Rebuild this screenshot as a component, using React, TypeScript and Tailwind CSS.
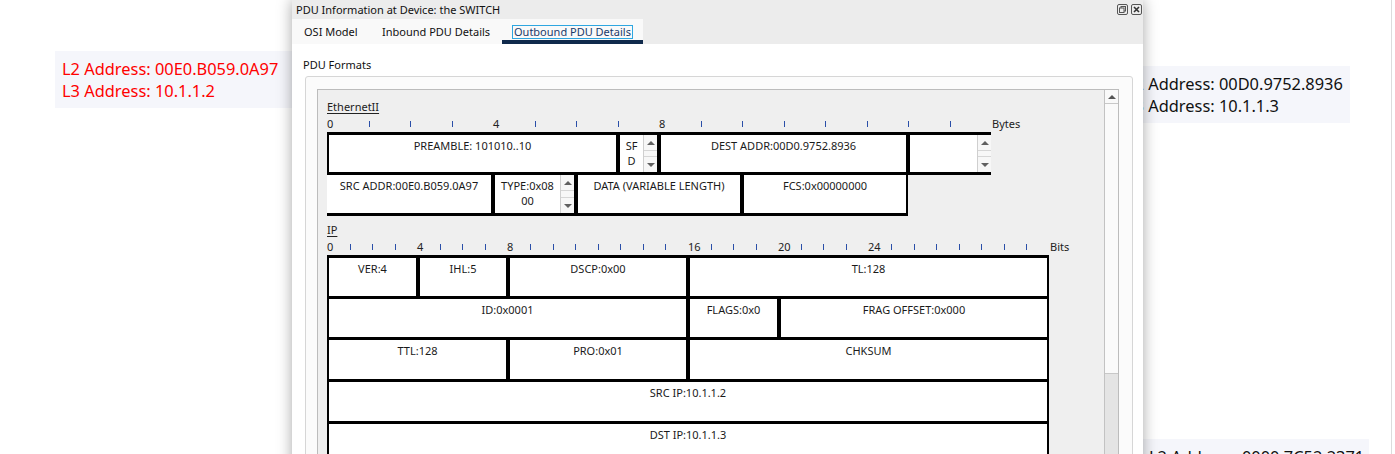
import React from "react";

const FONT = "font-['Noto_Sans',sans-serif]";

function Spinner() {
  return (
    <div className="w-[14px] h-full flex flex-col border-l border-[#cfcfcf] bg-[#f7f7f7] shrink-0">
      <div className="h-[16px] flex items-center justify-center border-b border-[#d6d6d6]">
        <div className="w-0 h-0 border-x-[4px] border-x-transparent border-b-[4px] border-b-[#606060]" />
      </div>
      <div className="flex-1" />
      <div className="h-[16px] flex items-center justify-center border-t border-[#d6d6d6]">
        <div className="w-0 h-0 border-x-[4px] border-x-transparent border-t-[4px] border-t-[#606060]" />
      </div>
    </div>
  );
}

function Field({
  w,
  children,
  spin,
  extra = "",
}: {
  w: string;
  children?: React.ReactNode;
  spin?: boolean;
  extra?: string;
}) {
  return (
    <div className={`flex h-full shrink-0 bg-white border-y-[3px] border-x-2 border-black ${w} ${extra}`}>
      <div className="flex-1 min-w-0 text-center pt-[3px] leading-[15px] text-[11px] text-[#1a1a1a]">
        {children}
      </div>
      {spin && <Spinner />}
    </div>
  );
}

function Ruler({
  step,
  count,
  labels,
  unit,
}: {
  step: number;
  count: number;
  labels: number[];
  unit: string;
}) {
  const ticks: number[] = [];
  for (let i = 1; i < count; i++) if (!labels.includes(i)) ticks.push(i);
  return (
    <div className="relative h-[14px] w-[760px] text-[11px] leading-[14px] text-[#222]">
      {labels.map((l) => (
        <span key={"l" + l} className="absolute top-0" style={{ left: Math.round(l * step) }}>
          {l}
        </span>
      ))}
      {ticks.map((t) => (
        <span
          key={"t" + t}
          className="absolute top-[4px] h-[6px] w-px bg-[#2a4fa8]"
          style={{ left: Math.round(t * step) }}
        />
      ))}
      <span className="absolute top-0" style={{ left: Math.round(count * step) + 1 }}>
        {unit}
      </span>
    </div>
  );
}

function RestoreIcon() {
  return (
    <svg width="11" height="11" viewBox="0 0 11 11" fill="none">
      <rect x="0.5" y="0.5" width="10" height="10" rx="1.5" stroke="#555" />
      <rect x="4" y="2.5" width="4.5" height="4.5" stroke="#555" />
      <rect x="2.5" y="4" width="4.5" height="4.5" fill="#ececec" stroke="#555" />
    </svg>
  );
}

function CloseIcon() {
  return (
    <svg width="11" height="11" viewBox="0 0 11 11" fill="none">
      <rect x="0.5" y="0.5" width="10" height="10" rx="1.5" stroke="#555" />
      <path d="M3 3 L8 8 M8 3 L3 8" stroke="#333" strokeWidth="1.6" />
    </svg>
  );
}

function AddrBox({
  lines,
  color,
  pos,
}: {
  lines: string[];
  color: string;
  pos: string;
}) {
  return (
    <div className={`absolute ${pos} bg-[#f5f6fb] px-[7px] pt-[7px] text-[16.4px] leading-[21.5px] ${color} whitespace-nowrap`}>
      {lines.map((l) => (
        <div key={l}>{l}</div>
      ))}
    </div>
  );
}

export default function App() {
  return (
    <div className={`relative w-[1395px] h-[454px] overflow-hidden bg-white ${FONT}`}>
      {/* canvas labels */}
      <AddrBox
        pos="left-[55px] top-[51px] w-[260px] h-[57px]"
        color="text-[#ff0000]"
        lines={["L2 Address: 00E0.B059.0A97", "L3 Address: 10.1.1.2"]}
      />
      <AddrBox
        pos="left-[1119px] top-[66px] w-[231px] h-[57px]"
        color="text-[#111]"
        lines={["L2 Address: 00D0.9752.8936", "L3 Address: 10.1.1.3"]}
      />
      <AddrBox
        pos="left-[1142px] top-[439px] w-[227px] h-[57px]"
        color="text-[#111]"
        lines={["L2 Address: 0000.7C52.2371", "L3 Address: 10.1.1.4"]}
      />
      <div className="absolute left-[1391px] top-0 h-full w-px bg-[#dcdcdc]" />

      {/* window */}
      <div className="absolute left-[292px] top-0 z-10 w-[851px] h-[480px] flex flex-col bg-white shadow-[0_0_14px_rgba(0,0,0,0.35)]">
        {/* title bar */}
        <div className="h-[19px] bg-[#ececec] flex items-center justify-between pl-[4px] pr-[1px]">
          <span className="text-[11px] leading-[19px] text-[#111]">PDU Information at Device: the SWITCH</span>
          <div className="flex items-center gap-[3px] -mt-[1px]">
            <RestoreIcon />
            <CloseIcon />
          </div>
        </div>
        {/* tabs */}
        <div className="h-[25px] bg-[#ececec] flex">
          <div className="flex bg-[#f9f9f9] text-[11px] leading-[12px] text-[#111] whitespace-nowrap">
            <div className="w-[78px] pl-[12px] pt-[7px]">OSI Model</div>
            <div className="w-[132px] pl-[12px] pt-[7px]">Inbound PDU Details</div>
            <div className="w-[141px] flex flex-col">
              <div className="h-[21px] pl-[10px] pt-[6px]">
                <span className="inline-block h-[14px] w-[121px] border border-[#2ea6e0] px-[1px] text-[#1b3a6b]">
                  Outbound PDU Details
                </span>
              </div>
              <div className="h-[4px] bg-[#102a4c]" />
            </div>
          </div>
        </div>
        {/* content */}
        <div className="flex-1 flex flex-col">
          <div className="pl-[11px] pt-[13px] text-[11px] leading-[15px] text-[#111]">PDU Formats</div>
          <div className="ml-[13px] mt-[4px] w-[828px] flex-1 border border-[#d6d6d6] rounded-[3px] bg-[#fbfbfb] pl-[11px] pt-[12px]">
            <div className="w-[802px] h-full border border-[#bcbcbc] bg-[#efefef] flex">
              <div className="flex-1 pl-[9px] pt-[10px] flex flex-col">
                {/* Ethernet */}
                <div className="text-[11px] leading-[14px] text-[#222] underline underline-offset-2">EthernetII</div>
                <div className="mt-[3px]">
                  <Ruler step={41.5} count={16} labels={[0, 4, 8]} unit="Bytes" />
                </div>
                <div className="mt-[1px] flex h-[43px]">
                  <Field w="w-[291px]">PREAMBLE: 101010..10</Field>
                  <Field w="w-[41px]" spin>
                    SF
                    <br />D
                  </Field>
                  <Field w="w-[249px]">DEST ADDR:00D0.9752.8936</Field>
                  <Field w="w-[83px]" spin extra="border-r-0" />
                </div>
                <div className="-mt-[3px] flex h-[44px]">
                  <Field w="w-[166px]" extra="border-l-0">SRC ADDR:00E0.B059.0A97</Field>
                  <Field w="w-[83px]" spin>
                    TYPE:0x08
                    <br />
                    00
                  </Field>
                  <Field w="w-[166px]">DATA (VARIABLE LENGTH)</Field>
                  <Field w="w-[166px]">FCS:0x00000000</Field>
                </div>

                {/* IP */}
                <div className="mt-[7px] text-[11px] leading-[14px] text-[#222] underline underline-offset-2">IP</div>
                <div className="mt-[3px]">
                  <Ruler step={22.56} count={32} labels={[0, 4, 8, 16, 20, 24]} unit="Bits" />
                </div>
                <div className="mt-[1px] flex h-[44px]">
                  <Field w="w-[91px]">VER:4</Field>
                  <Field w="w-[90px]">IHL:5</Field>
                  <Field w="w-[180px]">DSCP:0x00</Field>
                  <Field w="w-[361px]">TL:128</Field>
                </div>
                <div className="-mt-[3px] flex h-[44px]">
                  <Field w="w-[361px]">ID:0x0001</Field>
                  <Field w="w-[91px]">FLAGS:0x0</Field>
                  <Field w="w-[270px]">FRAG OFFSET:0x000</Field>
                </div>
                <div className="-mt-[3px] flex h-[45px]">
                  <Field w="w-[181px]">TTL:128</Field>
                  <Field w="w-[180px]">PRO:0x01</Field>
                  <Field w="w-[361px]">CHKSUM</Field>
                </div>
                <div className="-mt-[3px] flex h-[45px]">
                  <Field w="w-[722px]">SRC IP:10.1.1.2</Field>
                </div>
                <div className="-mt-[3px] flex h-[45px]">
                  <Field w="w-[722px]">DST IP:10.1.1.3</Field>
                </div>
              </div>
              {/* scrollbar */}
              <div className="w-[14px] shrink-0 border-l border-[#c2c2c2] flex flex-col">
                <div className="h-[14px] border-b border-[#c8c8c8] bg-[#f9f9f9] flex items-center justify-center">
                  <div className="w-0 h-0 border-x-[4px] border-x-transparent border-b-[4px] border-b-[#555]" />
                </div>
                <div className="h-[270px] bg-[#fafafa] border-b border-[#c8c8c8]" />
                <div className="flex-1 bg-[#e4e4e4]" />
              </div>
            </div>
          </div>
        </div>
      </div>
    </div>
  );
}
